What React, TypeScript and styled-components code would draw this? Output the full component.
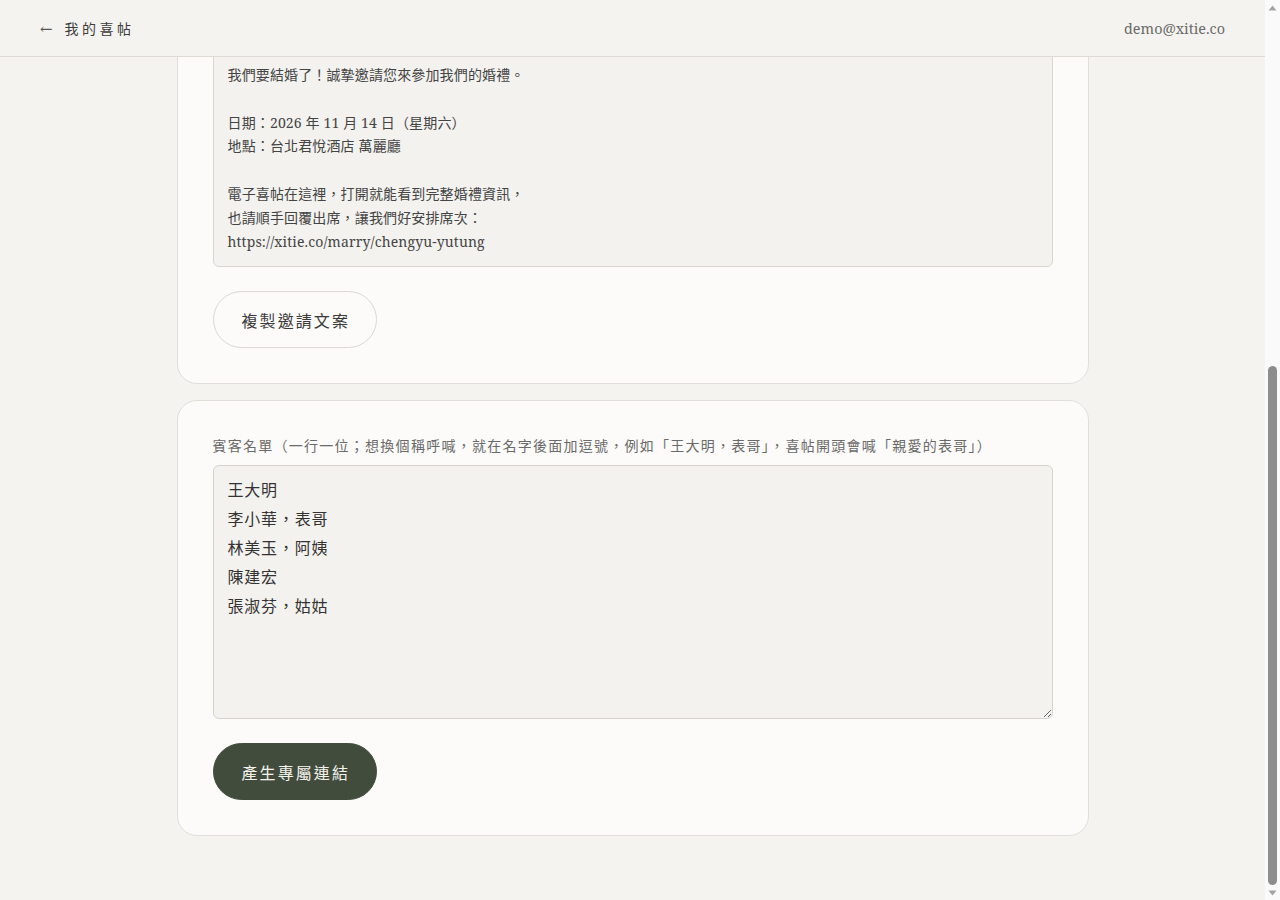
import React, { useLayoutEffect, useRef, useState } from "react";
import styled, { createGlobalStyle } from "styled-components";

const serifStack = `"Noto Serif", "DejaVu Serif", "Noto Sans CJK TC", serif`;

const GlobalStyle = createGlobalStyle`
  html, body {
    margin: 0;
    padding: 0;
    height: 100%;
    overflow: hidden;
    background: #f4f3ef;
  }
  body {
    font-family: ${serifStack};
    color: #333;
  }
  * { box-sizing: border-box; }
`;

const Frame = styled.div`
  display: flex;
  height: 100vh;
`;

/* The page scrolls inside this shell so the sticky header stays on top. */
const Shell = styled.div`
  flex: 1;
  min-width: 0;
  overflow-y: scroll;
  scrollbar-width: none;
  background: #f4f3ef;
  &::-webkit-scrollbar { display: none; }
`;

/* Classic vertical scrollbar drawn next to the shell. */
const Rail = styled.div`
  width: 15px;
  flex: none;
  display: flex;
  flex-direction: column;
  background: #fafafa;
`;

const RailButton = styled.div`
  height: 15px;
  flex: none;
  display: flex;
  align-items: center;
  justify-content: center;
`;

const RailTrack = styled.div`
  flex: 1;
  display: flex;
  flex-direction: column;
  align-items: center;
`;

const RailThumb = styled.div`
  width: 9px;
  border-radius: 5px;
  background: #8d8d8d;
`;

const Header = styled.header`
  position: sticky;
  top: 0;
  z-index: 10;
  height: 57px;
  padding: 0 40px;
  display: flex;
  align-items: center;
  justify-content: space-between;
  background: #f4f3ef;
  border-bottom: 1px solid #dedbd5;
`;

const BackLink = styled.a`
  display: flex;
  align-items: center;
  gap: 12px;
  font-size: 14px;
  letter-spacing: 0.25em;
  color: #3c3c3c;
  text-decoration: none;
  cursor: pointer;
`;

const Arrow = styled.span`
  font-size: 15px;
  letter-spacing: 0;
  color: #555;
`;

const Email = styled.span`
  font-size: 14.4px;
  color: #6b6b6b;
`;

const Main = styled.main`
  max-width: 912px;
  margin: 0 auto;
  padding: 46px 0 64px;
  display: flex;
  flex-direction: column;
  gap: 16px;
`;

const TitleBlock = styled.div`
  padding: 0 4px 12px;
`;

const PageTitle = styled.h1`
  margin: 0 0 8px;
  font-size: 28px;
  line-height: 40px;
  font-weight: 400;
  letter-spacing: 0.12em;
  color: #2f2f2f;
`;

const Subtitle = styled.p`
  margin: 0;
  font-size: 15px;
  line-height: 22px;
  color: #777;
  letter-spacing: 0.04em;
`;

const Card = styled.section`
  background: #fcfbf9;
  border: 1px solid #e2dfda;
  border-radius: 20px;
  padding: 35px;
  display: flex;
  flex-direction: column;
`;

const CardTitle = styled.h2`
  margin: 0 0 8px;
  font-size: 20px;
  line-height: 28px;
  font-weight: 400;
  letter-spacing: 0.1em;
  color: #2f2f2f;
`;

const CardText = styled.p`
  margin: 0 0 24px;
  font-size: 14px;
  line-height: 24px;
  color: #777;
`;

const Label = styled.label`
  display: block;
  margin-bottom: 9px;
  font-size: 14px;
  line-height: 20px;
  letter-spacing: 0.09em;
  color: #6a6a6a;
`;

const LinkRow = styled.div`
  display: flex;
  align-items: center;
  gap: 12px;
`;

const LinkBox = styled.div`
  flex: 1;
  padding: 12px 14px;
  font-size: 14px;
  line-height: 20px;
  color: #444;
  background: #f3f2ee;
  border: 1px solid #d9d6d0;
  border-radius: 6px;
`;

const StatGrid = styled.div`
  margin-top: 24px;
  display: grid;
  grid-template-columns: repeat(3, 1fr);
  gap: 12px;
`;

const Stat = styled.div`
  height: 96px;
  padding: 18px 20px;
  border: 1px solid #e2dfda;
  border-radius: 12px;
  display: flex;
  flex-direction: column;
  justify-content: space-between;
`;

const StatValue = styled.span`
  font-size: 26px;
  line-height: 32px;
  color: #3f4a3a;
`;

const StatName = styled.span`
  font-size: 13px;
  line-height: 18px;
  letter-spacing: 0.06em;
  color: #888;
`;

const MessageBox = styled.div`
  padding: 11px 14px 13px;
  font-size: 14px;
  line-height: 1.7;
  letter-spacing: 0.01em;
  color: #444;
  white-space: pre-wrap;
  background: #f3f2ee;
  border: 1px solid #d9d6d0;
  border-radius: 6px;
`;

const GuestInput = styled.textarea`
  display: block;
  width: 100%;
  height: 254px;
  padding: 10px 14px;
  font-family: ${serifStack};
  font-size: 16px;
  line-height: 29px;
  letter-spacing: 0.05em;
  color: #333;
  background: #f3f2ee;
  border: 1px solid #d6d3cd;
  border-radius: 6px;
  resize: vertical;
  outline: none;
`;

const PillButton = styled.button<{ $primary?: boolean }>`
  align-self: flex-start;
  margin-top: 24px;
  height: 57px;
  padding: 0 26px 0 28px;
  font-family: ${serifStack};
  font-size: 16px;
  letter-spacing: 0.13em;
  border-radius: 999px;
  cursor: pointer;
  border: 1px solid ${(p) => (p.$primary ? "#414c3c" : "#dcd9d3")};
  background: ${(p) => (p.$primary ? "#414c3c" : "#fcfbf9")};
  color: ${(p) => (p.$primary ? "#f4f2ec" : "#3a3a3a")};
`;

const SmallButton = styled.button`
  height: 46px;
  padding: 0 22px;
  font-family: ${serifStack};
  font-size: 15px;
  letter-spacing: 0.1em;
  border-radius: 999px;
  border: 1px solid #dcd9d3;
  background: #fcfbf9;
  color: #3a3a3a;
  cursor: pointer;
`;

const invitation = `我們要結婚了！誠摯邀請您來參加我們的婚禮。

日期：2026 年 11 月 14 日（星期六）
地點：台北君悅酒店 萬麗廳

電子喜帖在這裡，打開就能看到完整婚禮資訊，
也請順手回覆出席，讓我們好安排席次：
https://xitie.co/marry/chengyu-yutung`;

const guests = `王大明
李小華，表哥
林美玉，阿姨
陳建宏
張淑芬，姑姑`;

const stats = [
  { value: "12", name: "已產生連結" },
  { value: "8", name: "已回覆出席" },
  { value: "4", name: "尚未回覆" },
];

const Triangle = ({ down }: { down?: boolean }) => (
  <svg width="9" height="6" viewBox="0 0 9 6" aria-hidden="true">
    <path d={down ? "M0.5 0.5 L8.5 0.5 L4.5 5.5 Z" : "M0.5 5.5 L8.5 5.5 L4.5 0.5 Z"} fill="#a3a3a3" />
  </svg>
);

export default function App() {
  const shellRef = useRef<HTMLDivElement>(null);
  const trackRef = useRef<HTMLDivElement>(null);
  const [thumb, setThumb] = useState({ top: 0, size: 0 });

  const measure = () => {
    const el = shellRef.current;
    const track = trackRef.current;
    if (!el || !track) return;
    const trackLen = track.clientHeight;
    const size = Math.max(20, (trackLen * el.clientHeight) / el.scrollHeight);
    const range = el.scrollHeight - el.clientHeight;
    const top = range > 0 ? ((trackLen - size) * el.scrollTop) / range : 0;
    setThumb({ top, size });
  };

  // Open the page at the guest-list form, the bottom of the scroll area.
  useLayoutEffect(() => {
    const el = shellRef.current;
    if (el) el.scrollTop = el.scrollHeight;
    measure();
  }, []);

  return (
    <>
      <GlobalStyle />
      <Frame>
        <Shell ref={shellRef} onScroll={measure}>
          <Header>
            <BackLink>
              <Arrow>←</Arrow>
              我的喜帖
            </BackLink>
            <Email>demo@xitie.co</Email>
          </Header>
          <Main>
            <TitleBlock>
              <PageTitle>邀請賓客</PageTitle>
              <Subtitle>成宇 &amp; 雨彤 · 2026 年 11 月 14 日</Subtitle>
            </TitleBlock>

            <Card>
              <CardTitle>喜帖連結</CardTitle>
              <CardText>把這個連結傳給親友，他們就能看到婚禮資訊並回覆出席。</CardText>
              <LinkRow>
                <LinkBox>https://xitie.co/marry/chengyu-yutung</LinkBox>
                <SmallButton>複製連結</SmallButton>
              </LinkRow>
              <StatGrid>
                {stats.map((s) => (
                  <Stat key={s.name}>
                    <StatValue>{s.value}</StatValue>
                    <StatName>{s.name}</StatName>
                  </Stat>
                ))}
              </StatGrid>
            </Card>

            <Card>
              <CardTitle>邀請文案</CardTitle>
              <CardText>複製下面這段文字，貼到 LINE 或訊息裡，就能一次邀請大家。</CardText>
              <MessageBox>{invitation}</MessageBox>
              <PillButton>複製邀請文案</PillButton>
            </Card>

            <Card>
              <Label htmlFor="guests">
                賓客名單（一行一位；想換個稱呼喊，就在名字後面加逗號，例如「王大明，表哥」，喜帖開頭會喊「親愛的表哥」）
              </Label>
              <GuestInput id="guests" defaultValue={guests} />
              <PillButton $primary>產生專屬連結</PillButton>
            </Card>
          </Main>
        </Shell>
        <Rail>
          <RailButton>
            <Triangle />
          </RailButton>
          <RailTrack ref={trackRef}>
            <RailThumb style={{ marginTop: thumb.top, height: thumb.size }} />
          </RailTrack>
          <RailButton>
            <Triangle down />
          </RailButton>
        </Rail>
      </Frame>
    </>
  );
}
